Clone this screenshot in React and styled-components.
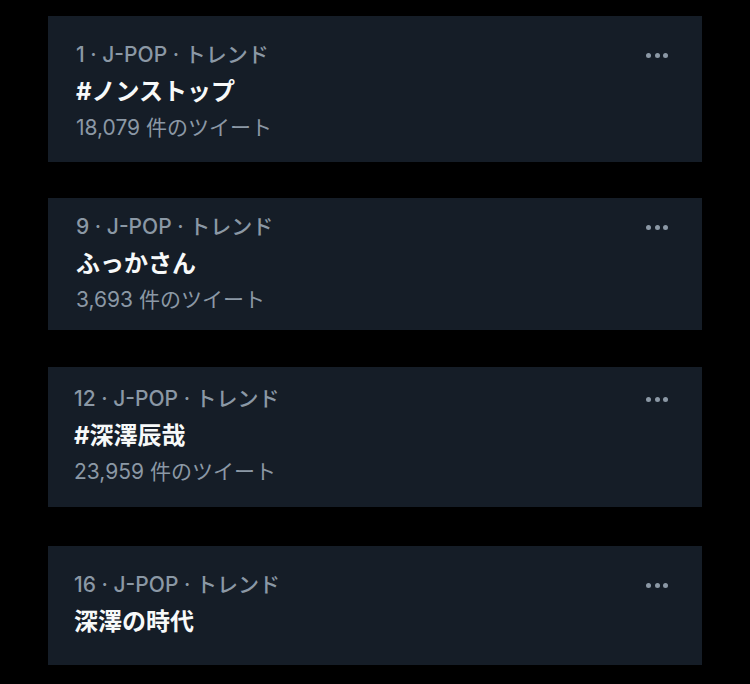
import React from "react";
import styled, { createGlobalStyle } from "styled-components";

const Global = createGlobalStyle`
  html, body { margin: 0; padding: 0; background: #000; }
  body { font-family: "Inter", "Noto Sans CJK JP", sans-serif; }
`;

const Page = styled.div`
  width: 750px;
  height: 684px;
  background: #000;
  padding: 16px 48px 0 48px;
  box-sizing: border-box;
  display: flex;
  flex-direction: column;
`;

const Card = styled.div`
  background: #151d27;
  margin-top: ${(p) => p.$mt}px;
  padding: ${(p) => p.$pt}px 34px ${(p) => p.$pb}px ${(p) => p.$pl}px;
  display: flex;
  align-items: flex-start;
  justify-content: space-between;
`;

const Body = styled.div`
  display: flex;
  flex-direction: column;
`;

const Meta = styled.div`
  color: #8b98a5;
  font-size: 21px;
  line-height: 36px;
  font-weight: 500;
  white-space: nowrap;
`;

const Title = styled.div`
  color: #f7f9f9;
  font-size: 24px;
  line-height: 37px;
  font-weight: 700;
  white-space: nowrap;
`;

const Count = styled.div`
  color: #8b98a5;
  font-size: 21px;
  line-height: 36px;
  font-weight: 400;
  white-space: nowrap;
`;

const More = styled.div`
  height: 36px;
  display: flex;
  align-items: center;
  gap: 3.5px;
`;

const Dot = styled.span`
  width: 5px;
  height: 5px;
  border-radius: 50%;
  background: #8b98a5;
`;

const trends = [
  { rank: 1, title: "#ノンストップ", count: "18,079", mt: 0, pt: 21, pb: 16, pl: 28 },
  { rank: 9, title: "ふっかさん", count: "3,693", mt: 36, pt: 11, pb: 12, pl: 28 },
  { rank: 12, title: "#深澤辰哉", count: "23,959", mt: 37, pt: 14, pb: 17, pl: 26 },
  { rank: 16, title: "深澤の時代", count: null, mt: 39, pt: 21, pb: 25, pl: 26 },
];

export default function App() {
  return (
    <>
      <Global />
      <Page>
        {trends.map((t) => (
          <Card key={t.rank} $mt={t.mt} $pt={t.pt} $pb={t.pb} $pl={t.pl}>
            <Body>
              <Meta>{t.rank} · J-POP · トレンド</Meta>
              <Title>{t.title}</Title>
              {t.count && <Count>{t.count} 件のツイート</Count>}
            </Body>
            <More>
              <Dot />
              <Dot />
              <Dot />
            </More>
          </Card>
        ))}
      </Page>
    </>
  );
}
